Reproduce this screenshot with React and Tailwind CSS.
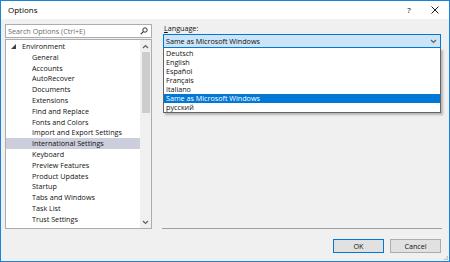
import React from 'react';

const font = { fontFamily: '"Open Sans", "Noto Sans", sans-serif' };

const treeItems = [
  'General',
  'Accounts',
  'AutoRecover',
  'Documents',
  'Extensions',
  'Find and Replace',
  'Fonts and Colors',
  'Import and Export Settings',
  'International Settings',
  'Keyboard',
  'Preview Features',
  'Product Updates',
  'Startup',
  'Tabs and Windows',
  'Task List',
  'Trust Settings',
  'Web Browser',
];

const languages = ['Deutsch', 'English', 'Español', 'Français', 'Italiano', 'Same as Microsoft Windows', 'русский'];

const Chevron = ({ up }) => (
  <svg width="7" height="5" viewBox="0 0 7 5">
    <path d={up ? 'M1 4 L3.5 1.5 L6 4' : 'M1 1 L3.5 3.5 L6 1'} fill="none" stroke="#606060" strokeWidth="1.2" />
  </svg>
);

const TreeView = () => (
  <div className="relative h-[190px] border border-[#abadb3] bg-white overflow-hidden">
    <div className="pt-[1px] pr-[11px]">
      <div className="flex items-center h-[10.8px] text-[7.2px] text-[#111]">
        <svg width="5" height="5" viewBox="0 0 5 5" className="ml-[5px] mr-[6px]">
          <path d="M5 0 L5 5 L0 5 Z" fill="#404040" />
        </svg>
        <span>Environment</span>
      </div>
      {treeItems.map((item) => (
        <div
          key={item}
          className={`flex items-center h-[10.8px] pl-[26px] text-[7.2px] text-[#111] ${
            item === 'International Settings' ? 'bg-[#cccedb]' : ''
          }`}
        >
          {item}
        </div>
      ))}
    </div>
    <div className="absolute top-0 right-0 bottom-0 w-[11px] bg-[#f0f0f0] flex flex-col items-center">
      <div className="h-[12px] flex items-center justify-center pt-[1px]">
        <Chevron up />
      </div>
      <div className="w-[8px] h-[61px] bg-[#cdcdcd]" />
      <div className="flex-1" />
      <div className="h-[12px] flex items-center justify-center">
        <Chevron />
      </div>
    </div>
  </div>
);

const LanguageCombo = () => (
  <div className="relative">
    <div className="h-[14px] border border-[#0078d7] bg-[#cce4f7] flex items-center pl-[2px] pr-[3px] text-[7.2px] text-[#111]">
      <span className="flex-1">Same as Microsoft Windows</span>
      <Chevron />
    </div>
    <div className="absolute left-0 right-0 top-[14px] border border-t-0 border-[#646464] bg-white pt-[1px] shadow-[2px_2px_2px_rgba(0,0,0,0.25)] z-10">
      {languages.map((lang) => (
        <div
          key={lang}
          className={`h-[9px] flex items-center pl-[2px] text-[7.2px] ${
            lang === 'Same as Microsoft Windows' ? 'bg-[#0078d7] text-white' : 'text-[#111]'
          }`}
        >
          {lang}
        </div>
      ))}
    </div>
  </div>
);

const Button = ({ children, primary }) => (
  <button
    className={`w-[51px] h-[14px] flex items-center justify-center bg-[#e1e1e1] text-[7.2px] text-[#111] border ${
      primary ? 'border-[#0078d7]' : 'border-[#adadad]'
    }`}
  >
    {children}
  </button>
);

export default function App() {
  return (
    <div style={font} className="w-[450px] h-[262px] border border-[#1883d7] flex flex-col bg-[#f0f0f0]">
      <div className="h-[18px] bg-white flex items-center pl-[7px] text-[8px] text-black">
        <span className="flex-1">Options</span>
        <span className="w-[10px] text-center mr-[17px]">?</span>
        <svg width="8" height="8" viewBox="0 0 8 8" className="mr-[10px]">
          <path d="M0.5 0.5 L7.5 7.5 M7.5 0.5 L0.5 7.5" stroke="#000" strokeWidth="0.9" />
        </svg>
      </div>

      <div className="flex-1 flex flex-col pl-[4px] pr-[7px] pt-[5px]">
        <div className="flex h-[206px]">
          <div className="w-[147px] flex flex-col gap-[1px]">
            <div className="h-[14px] border border-[#abadb3] bg-white flex items-center pl-[2px] pr-[3px]">
              <span className="flex-1 text-[7.2px] text-[#6d6d6d]">Search Options (Ctrl+E)</span>
              <svg width="8" height="8" viewBox="0 0 8 8">
                <circle cx="5" cy="3" r="2.2" fill="none" stroke="#333" strokeWidth="1" />
                <path d="M3.4 4.6 L0.8 7.2" stroke="#333" strokeWidth="1.2" />
              </svg>
            </div>
            <TreeView />
          </div>

          <div className="ml-[10px] flex-1 flex flex-col border-b border-[#a0a0a0] mb-[1px] pl-[1px] pr-[1px]">
            <div className="h-[11px] mt-[-1px] flex items-center text-[7.2px] text-[#111] pl-[1px]">
              <span>
                <span className="underline">L</span>anguage:
              </span>
            </div>
            <LanguageCombo />
          </div>
        </div>

        <div className="flex justify-end gap-[6px] pt-[9px] pr-[1px]">
          <Button primary>OK</Button>
          <Button>Cancel</Button>
        </div>
        <div className="flex-1 flex items-end justify-end pb-[1px] mr-[-6px]">
          <svg width="4" height="4" viewBox="0 0 4 4">
            <rect x="3" y="0" width="1" height="1" fill="#b0b0b0" />
            <rect x="1.5" y="1.5" width="1" height="1" fill="#b0b0b0" />
            <rect x="3" y="1.5" width="1" height="1" fill="#b0b0b0" />
            <rect x="0" y="3" width="1" height="1" fill="#b0b0b0" />
            <rect x="1.5" y="3" width="1" height="1" fill="#b0b0b0" />
            <rect x="3" y="3" width="1" height="1" fill="#b0b0b0" />
          </svg>
        </div>
      </div>
    </div>
  );
}
